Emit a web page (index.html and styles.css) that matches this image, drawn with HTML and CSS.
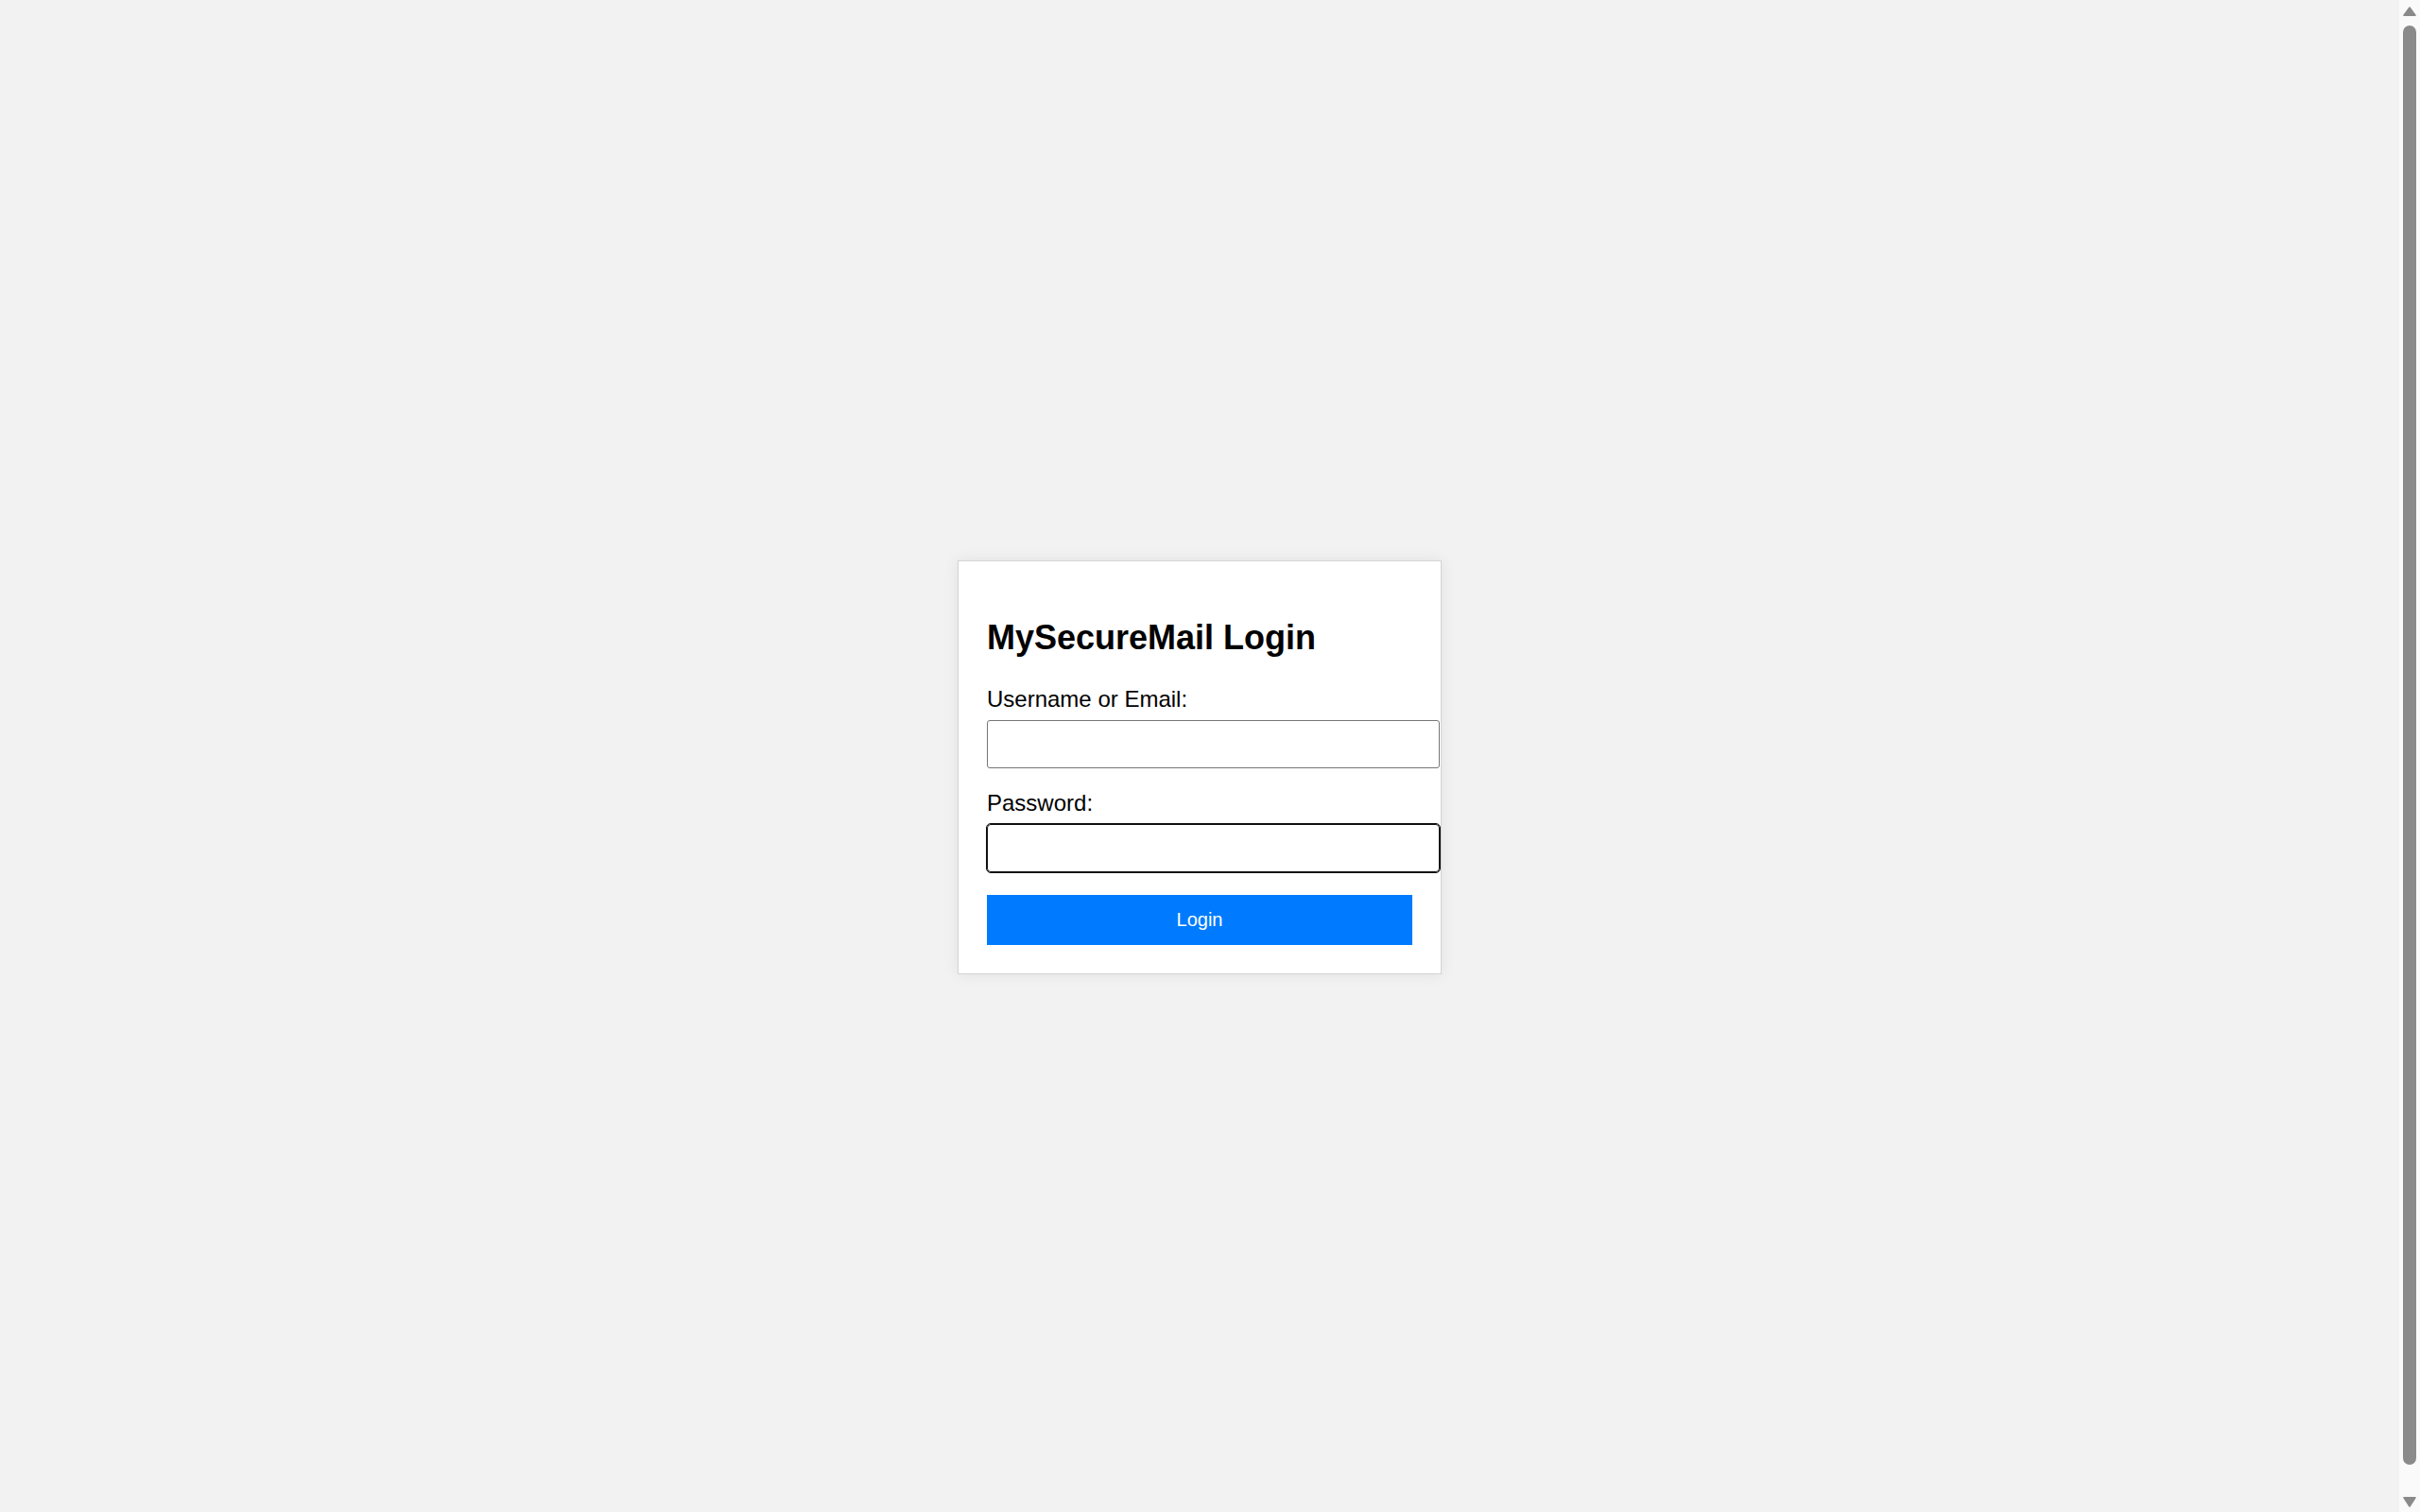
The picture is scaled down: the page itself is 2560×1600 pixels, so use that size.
FILE: index.html
```html
<!DOCTYPE html>
<html lang="en">
<head>
<meta charset="utf-8">
<title>MySecureMail Login</title>
<link rel="stylesheet" href="styles.css">
</head>
<body>
  <main class="page">
    <div class="page-inner">
      <div class="login-card">
        <h2 class="login-title">MySecureMail Login</h2>
        <form class="login-form">
          <div class="field">
            <label class="field-label" for="username">Username or Email:</label>
            <input class="field-input" id="username" type="text">
          </div>
          <div class="field">
            <label class="field-label" for="password">Password:</label>
            <input class="field-input is-focused" id="password" type="password">
          </div>
          <button class="login-button" type="button">Login</button>
        </form>
      </div>
    </div>
  </main>
  <div class="scroll-rail" aria-hidden="true">
    <div class="scroll-arrow scroll-arrow-up">
      <svg width="14" height="10" viewBox="0 0 14 10"><polygon points="7,1 13,9.2 1,9.2" fill="#8a8a8a" stroke="#8a8a8a" stroke-width="1.6" stroke-linejoin="round"/></svg>
    </div>
    <div class="scroll-thumb"></div>
    <div class="scroll-arrow scroll-arrow-down">
      <svg width="14" height="11" viewBox="0 0 14 11"><polygon points="1,0.8 13,0.8 7,10" fill="#8a8a8a" stroke="#8a8a8a" stroke-width="1.6" stroke-linejoin="round"/></svg>
    </div>
  </div>
</body>
</html>
```
FILE: styles.css
```css
html {
  height: 100%;
  overflow: hidden;
  background: #f2f2f2;
}

body {
  margin: 0;
  height: 100vh;
  display: flex;
  background: #f2f2f2;
  font-family: "Liberation Sans", Arial, sans-serif;
  color: #000;
}

.page {
  flex: 1;
  padding: 12px;
  min-width: 0;
}

.page-inner {
  height: 100vh;
  display: flex;
  justify-content: center;
  align-items: center;
}

.login-card {
  width: 450px;
  padding: 30px;
  background: #fff;
  border: 1.5px solid #d4d4d4;
  box-shadow: 0 0 15px rgba(0, 0, 0, 0.08);
}

.login-title {
  margin: 29.9px 0 29.9px;
  font-size: 36px;
  font-weight: bold;
  line-height: normal;
}

.login-form {
  margin: 0;
}

.field {
  margin-bottom: 23.5px;
}

.field-label {
  display: block;
  margin-bottom: 8px;
  font-size: 24px;
  line-height: normal;
}

.field-input {
  display: block;
  box-sizing: content-box;
  width: 100%;
  height: 25px;
  margin: 0;
  padding: 12px 14px 12px 13px;
  border: 1.5px solid #767676;
  border-radius: 3px;
  background: #fff;
  font-family: "Liberation Sans", Arial, sans-serif;
  font-size: 20px;
  outline: none;
}

.field-input.is-focused {
  border-color: #101010;
  outline: 1.5px solid #101010;
  outline-offset: 0;
  border-radius: 4px;
}

.login-button {
  display: block;
  width: 100%;
  height: 53px;
  margin: 0;
  padding: 0;
  border: none;
  background: #007bff;
  color: #fff;
  font-family: "Liberation Sans", Arial, sans-serif;
  font-size: 20px;
  cursor: pointer;
}

/* Browser scrollbar rail */
.scroll-rail {
  flex: 0 0 22px;
  height: 100vh;
  display: flex;
  flex-direction: column;
  background: #fafafa;
}

.scroll-arrow {
  flex: 0 0 22px;
  display: flex;
  justify-content: center;
  box-sizing: border-box;
  align-items: flex-start;
}

.scroll-arrow-up {
  padding-top: 6.5px;
}

.scroll-arrow-down {
  padding-top: 6px;
}

.scroll-thumb {
  flex: 1;
  margin: 4.7px 4px 28px;
  background: #8a8a8a;
  border-radius: 7px;
}
```
